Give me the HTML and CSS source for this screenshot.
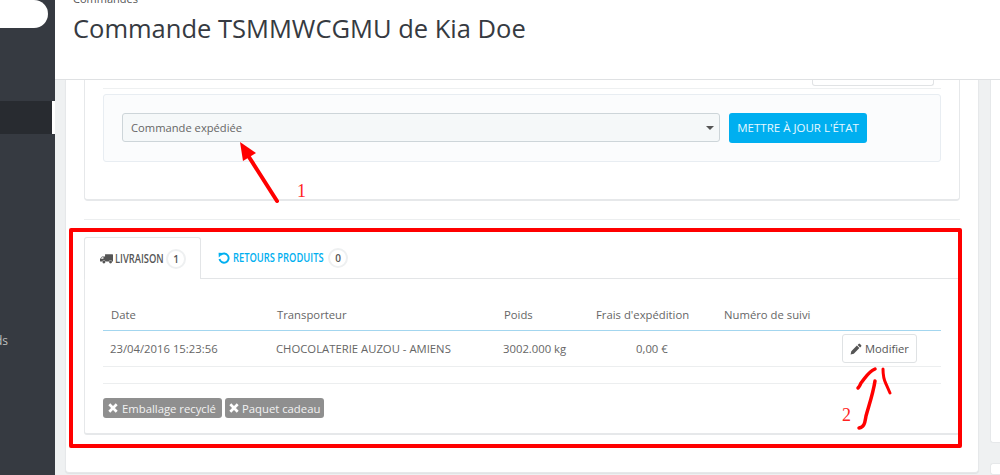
FILE: index.html
```html
<!DOCTYPE html>
<html lang="fr">
<head>
<meta charset="utf-8">
<title>Commande TSMMWCGMU</title>
<link rel="stylesheet" href="styles.css">
</head>
<body>
<div class="app">
  <aside class="sidebar">
    <div class="search"></div>
    <div class="active-item"></div>
    <div class="cut-label">ds</div>
  </aside>
  <div class="main">
    <header class="page-head">
      <div class="crumb">Commandes</div>
      <h1 class="title">Commande TSMMWCGMU de Kia Doe</h1>
    </header>
    <div class="content">
      <section class="panel">
        <div class="status-card">
          <div class="status-head"><span class="ghost-btn"></span></div>
          <div class="well">
            <div class="select"><span>Commande expédiée</span><i class="caret"></i></div>
            <button class="update-btn">METTRE À JOUR L'ÉTAT</button>
          </div>
        </div>
        <hr class="divider">
        <div class="tabs">
          <div class="tab tab-active">
            <svg class="tab-icon" viewBox="0 0 18 13" width="13" height="10"><path fill="#555" d="M7 0h10.200a.8.8 0 0 1 .8.8V10h-1.200a2.300 2.300 0 0 0-4.500 0H7.600V9.900A2.300 2.300 0 0 0 3.200 10H.8A.8.8 0 0 1 0 9.200V6.400L2.800 3H7zM2.900 4.200 1.300 6.300h3.500V4.200z"/><circle cx="5.400" cy="10.600" r="2" fill="#555"/><circle cx="14.600" cy="10.600" r="2" fill="#555"/></svg>
            <span class="tab-label">LIVRAISON</span><b class="count">1</b>
          </div>
          <div class="tab tab-link">
            <svg class="tab-icon" viewBox="0 0 12 12" width="12" height="12"><path fill="none" stroke="#00aff0" stroke-width="1.900" d="M2.700 2.900A4.600 4.600 0 1 1 1.500 7"/><path fill="#00aff0" d="M.6 .8 5.400 .9.8 5.500z"/></svg>
            <span class="tab-label">RETOURS PRODUITS</span><b class="count">0</b>
          </div>
        </div>
        <div class="tab-body">
          <table class="ship-table">
            <thead>
              <tr><th class="c-date">Date</th><th class="c-carrier">Transporteur</th><th class="c-weight">Poids</th><th class="c-fee">Frais d'expédition</th><th class="c-track">Numéro de suivi</th><th></th></tr>
            </thead>
            <tbody>
              <tr>
                <td>23/04/2016 15:23:56</td><td>CHOCOLATERIE AUZOU - AMIENS</td><td>3002.000 kg</td><td class="fee-val">0,00 €</td><td></td>
                <td class="act"><span class="edit-btn"><svg viewBox="0 0 12 12" width="12" height="12"><path fill="#555" d="M8.600.9a.9.9 0 0 1 1.300 0l1.200 1.200a.9.9 0 0 1 0 1.300l-1 1L7.600 1.900zM6.900 2.600l2.500 2.500-5.600 5.600L.6 11.400l.7-3.200z"/></svg>Modifier</span></td>
              </tr>
            </tbody>
          </table>
          <div class="tag-row">
            <span class="tag"><svg viewBox="0 0 10 10" width="10" height="10"><path stroke="#fff" stroke-width="2.700" d="M1.300 1.300l7.400 7.400M8.700 1.300 1.300 8.700"/></svg>Emballage recyclé</span>
            <span class="tag"><svg viewBox="0 0 10 10" width="10" height="10"><path stroke="#fff" stroke-width="2.700" d="M1.300 1.300l7.400 7.400M8.700 1.300 1.300 8.700"/></svg>Paquet cadeau</span>
          </div>
        </div>
      </section>
      <aside class="side-col">
        <div class="side-card first"></div>
        <div class="side-card"></div>
      </aside>
    </div>
  </div>
</div>
<div class="mark-box"></div>
<svg class="marks" viewBox="0 0 1000 475" width="1000" height="475">
  <path class="ink" stroke-width="4" d="M277 201 249 157"/>
  <path class="solid" d="M240 142 256 153 243 161z"/>
  <path class="ink" stroke-width="3.500" d="M875 369C868 372 866 377 861 383C860 385 860 386 858 388"/>
  <path class="ink" stroke-width="3" d="M883 369C883 375 884 380 886 384L890 393"/>
  <path class="ink" stroke-width="3.500" d="M875 381C873 394 869 405 866 416C865 421 865 427 859 428"/>
  <text class="num" x="297" y="197">1</text>
  <text class="num" x="842" y="421">2</text>
</svg>
</body>
</html>
```
FILE: styles.css
```css
* { box-sizing: border-box; }
html, body { margin: 0; height: 475px; overflow: hidden; }
body { font-family: "Open Sans", sans-serif; color: #666; background: #eff1f2; position: relative; }
.app { display: flex; width: 1000px; height: 475px; }

.sidebar { position: relative; width: 55px; flex: none; background: #363a41; }
.search { width: 48px; height: 28px; background: #fff; border-radius: 0 14px 14px 0; }
.active-item { margin-top: 73px; height: 33px; background: #282b30; border-right: 3px solid #fff; width: 55px; }
.cut-label { margin-top: 199px; margin-left: -5px; font-size: 12px; line-height: 16px; color: #bebebe; }

.main { flex: 1; display: flex; flex-direction: column; min-width: 0; }
.page-head { height: 80px; flex: none; background: #fff; border-bottom: 1px solid #dfe1e3; padding-left: 18px; overflow: hidden; }
.crumb { margin-top: -9px; font-size: 11px; line-height: 16px; color: #555; }
.title { margin: 4px 0 0; font-size: 25.500px; line-height: 34px; font-weight: 400; color: #363a41; white-space: nowrap; }

.content { flex: 1; display: flex; padding-left: 10px; min-height: 0; }
.panel { width: 914px; height: 393px; flex: none; background: #fff; border: 1px solid #e6e8ea; border-top: 0; border-radius: 0 0 4px 4px; padding: 0 18px; box-shadow: 0 1px 1px rgba(0,0,0,.06); }
.status-card { height: 121px; background: #fff; border: 1px solid #e6e8ea; border-top: 0; border-bottom-width: 2px; border-radius: 0 0 4px 4px; padding: 0 18px; }
.status-head { height: 9px; border-bottom: 1px solid #eef0f1; display: flex; justify-content: flex-end; padding-right: 7px; }
.ghost-btn { width: 122px; height: 6px; background: #fff; border: 1px solid #e1e3e5; border-top: 0; border-radius: 0 0 3px 3px; }
.well { display: flex; align-items: flex-start; height: 68px; margin-top: 5px; padding: 18px 18px 0; background: #fbfcfd; border: 1px solid #e8edf2; border-radius: 3px; }
.select { position: relative; width: 598px; height: 29px; padding-left: 8px; background: #f5f8f9; border: 1px solid #cdd5d9; border-radius: 3px; font-size: 11.200px; line-height: 27px; color: #666; }
.caret { position: absolute; right: 5px; top: 12px; border: 4px solid transparent; border-top: 4px solid #555; border-bottom: 0; }
.update-btn { width: 138px; height: 30px; margin-left: 9px; padding: 0; background: #00aff0; border: 0; border-radius: 3px; color: #e6f8ff; font: 400 11.500px/30px "Open Sans", sans-serif; white-space: nowrap; }
.divider { height: 1px; margin: 18px 0 17px; border: 0; background: #eceeef; }

.tabs { display: flex; height: 42px; border-bottom: 1px solid #e3e5e7; }
.tab { display: flex; align-items: center; font-size: 12px; font-weight: 600; }
.tab-active { width: 117px; height: 42px; padding-left: 15px; background: #fff; border: 1px solid #e3e5e7; border-bottom: 0; border-radius: 3px 3px 0 0; color: #555; }
.tab-link { padding-left: 17px; color: #00aff0; }
.tab-label { display: block; white-space: nowrap; transform: scaleX(.78); transform-origin: left center; }
.tab-active .tab-label { width: 48px; margin-left: 2px; }
.tab-link .tab-label { width: 92px; margin-left: 3px; }
.count { width: 20px; height: 20px; flex: none; margin-left: 3px; border: 2px solid #eef0f1; border-radius: 50%; background: #fff; color: #555; font: 600 10px/16px "Open Sans", sans-serif; text-align: center; }

.tab-body { height: 156px; border: 1px solid #e6e8ea; border-top: 0; border-bottom-width: 2px; border-radius: 0 0 3px 3px; padding: 17px 18px 0; }
.ship-table { width: 838px; border-collapse: separate; border-spacing: 0; table-layout: fixed; font-size: 11.300px; }
.ship-table th { height: 35px; padding: 2px 0 0 8px; text-align: left; font-weight: 400; color: #666; border-bottom: 1px solid #a3d6ef; }
.ship-table td { height: 36px; padding: 0 0 0 7px; color: #666; border-bottom: 1px solid #eceeef; white-space: nowrap; }
.c-date { width: 166px; }
.c-carrier { width: 227px; }
.c-weight { width: 92px; }
.c-fee { width: 128px; }
.c-track { width: 117px; }
.ship-table .fee-val { padding-left: 48px; }
.edit-btn { display: inline-flex; align-items: center; gap: 3px; width: 75px; height: 29px; margin-left: 2px; padding-left: 7px; background: #fff; border: 1px solid #dfe2e4; border-radius: 3px; color: #555; font-size: 11.200px; }
.tag-row { display: flex; gap: 3px; margin-top: 16px; padding-top: 14px; border-top: 1px solid #eceeef; }
.tag { display: inline-flex; align-items: center; gap: 4px; height: 20px; padding: 0 6px 0 5px; background: #8f8f8f; border-radius: 3px; color: #f2f2f2; font-size: 11.300px; white-space: nowrap; }
.tag + .tag { gap: 3px; padding: 0 4px; }

.side-col { flex: none; width: 10px; margin-left: 11px; display: flex; flex-direction: column; gap: 20px; }
.side-card { flex: 1; background: #fff; border: 1px solid #e6e8ea; border-right: 0; border-radius: 3px 0 0 3px; }
.side-card.first { flex: none; height: 363px; border-top: 0; border-radius: 0 0 0 3px; }

.mark-box { position: absolute; left: 69px; top: 228px; width: 893px; height: 220px; border: 4px solid #f00; border-radius: 2px; }
.marks { position: absolute; left: 0; top: 0; pointer-events: none; }
.ink { fill: none; stroke: #f00; stroke-linecap: round; }
.solid { fill: #f00; }
.num { fill: #f22; font-family: "Liberation Serif", serif; font-size: 18px; }
```
